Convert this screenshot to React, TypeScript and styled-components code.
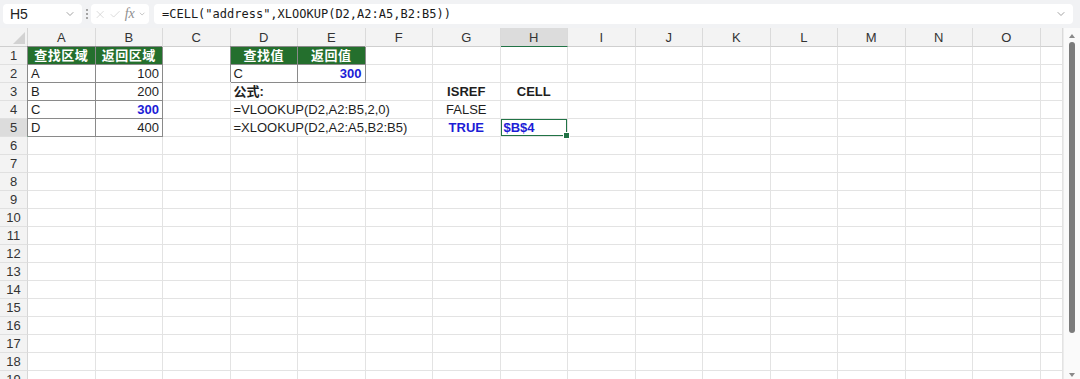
import React from 'react';
import styled, { createGlobalStyle, css } from 'styled-components';
import { X, Check, ChevronDown } from 'lucide-react';

const GlobalStyle = createGlobalStyle`
  html, body {
    margin: 0;
    padding: 0;
    background: #ffffff;
  }
  body {
    font-family: "Liberation Sans", "Noto Sans CJK SC", sans-serif;
    overflow: hidden;
  }
`;

const Window = styled.div`
  width: 1080px;
  height: 379px;
  display: flex;
  flex-direction: column;
  background: #f1f2f4;
  overflow: hidden;
`;

const TopBar = styled.div`
  height: 28px;
  display: flex;
  align-items: center;
  gap: 3px;
  padding: 0 7px 0 3px;
  box-sizing: border-box;
  flex-shrink: 0;
`;

const Box = styled.div`
  height: 20px;
  background: #ffffff;
  border-radius: 4px;
  display: flex;
  align-items: center;
  box-sizing: border-box;
`;

const NameBox = styled(Box)`
  width: 79px;
  padding: 0 6px 0 7px;
  justify-content: space-between;
  font-size: 14px;
  color: #222;
`;

const Dots = styled.div`
  width: 3px;
  display: flex;
  flex-direction: column;
  gap: 2px;
  align-items: center;
  span {
    width: 2px;
    height: 2px;
    border-radius: 50%;
    background: #8a8a8a;
  }
`;

const FnBox = styled(Box)`
  width: 58px;
  padding: 0 3px;
  gap: 3px;
  color: #c4c4c4;
`;

const Fx = styled.span`
  font-family: "Liberation Serif", serif;
  font-style: italic;
  font-size: 14px;
  color: #8f8f8f;
`;

const FormulaInput = styled(Box)`
  flex: 1;
  margin-left: 2px;
  padding: 0 6px 0 8px;
  justify-content: space-between;
  font-family: "DejaVu Sans Mono", "Liberation Mono", monospace;
  font-size: 12px;
  color: #1a1a1a;
`;

const Sheet = styled.div`
  flex: 1;
  display: flex;
  background: #ffffff;
  overflow: hidden;
`;

const Grid = styled.div`
  flex: 1;
  display: grid;
  grid-template-columns: 28px repeat(15, 67.5px) 1fr;
  grid-auto-rows: 18px;
  grid-template-rows: 19px;
  align-content: start;
  overflow: hidden;
`;

const Corner = styled.div`
  background: #f3f3f3;
  border-right: 1px solid #d6d6d6;
  border-bottom: 1px solid #cfcfcf;
  position: relative;
  &::after {
    content: '';
    position: absolute;
    right: 2px;
    bottom: 2px;
    border-left: 12px solid transparent;
    border-bottom: 12px solid #d2d2d2;
  }
`;

const ColHead = styled.div<{ $active?: boolean }>`
  background: ${p => (p.$active ? '#dcdcdc' : '#f3f3f3')};
  border-right: 1px solid #dadada;
  border-bottom: 1px solid ${p => (p.$active ? '#217346' : '#cfcfcf')};
  display: flex;
  align-items: center;
  justify-content: center;
  font-size: 13px;
  color: #333;
`;

const RowHead = styled.div<{ $active?: boolean }>`
  background: ${p => (p.$active ? '#dcdcdc' : '#f3f3f3')};
  border-right: 1px solid ${p => (p.$active ? '#217346' : '#d6d6d6')};
  border-bottom: 1px solid #e0e0e0;
  display: flex;
  align-items: center;
  justify-content: center;
  font-size: 13px;
  color: #333;
`;

type Align = 'left' | 'center' | 'right';

const Cell = styled.div<{
  $align?: Align;
  $bold?: boolean;
  $blue?: boolean;
  $head?: boolean;
  $framed?: boolean;
  $selected?: boolean;
  $span?: number;
}>`
  position: relative;
  box-sizing: border-box;
  border-right: 1px solid #e3e3e3;
  border-bottom: 1px solid #e3e3e3;
  padding: 0 3px;
  display: flex;
  align-items: center;
  justify-content: ${p =>
    p.$align === 'right' ? 'flex-end' : p.$align === 'center' ? 'center' : 'flex-start'};
  font-size: 13px;
  line-height: 17px;
  white-space: nowrap;
  color: ${p => (p.$blue ? '#1c1cd6' : '#1e1e1e')};
  font-weight: ${p => (p.$bold ? 700 : 400)};
  grid-column: span ${p => p.$span ?? 1};
  ${p =>
    p.$framed &&
    css`
      border-right-color: #8a8a8a;
      border-bottom-color: #8a8a8a;
      box-shadow: -1px -1px 0 #8a8a8a;
    `}
  ${p =>
    p.$head &&
    css`
      background: #246f2d;
      color: #ffffff;
      font-weight: 700;
      letter-spacing: 0.5px;
    `}
  ${p =>
    p.$selected &&
    css`
      box-shadow: inset 0 0 0 1px #217346;
      &::after {
        content: '';
        position: absolute;
        right: -3px;
        bottom: -3px;
        width: 5px;
        height: 5px;
        background: #217346;
        border: 1px solid #ffffff;
        z-index: 2;
      }
    `}
`;

const Scrollbar = styled.div`
  width: 17px;
  flex-shrink: 0;
  display: flex;
  flex-direction: column;
  align-items: center;
  background: #fafafa;
  border-left: 1px solid #ececec;
  padding-top: 6px;
  box-sizing: border-box;
`;

const Arrow = styled.div<{ $down?: boolean }>`
  width: 0;
  height: 0;
  border-left: 3px solid transparent;
  border-right: 3px solid transparent;
  ${p =>
    p.$down
      ? css`border-top: 4px solid #8a8a8a;`
      : css`border-bottom: 4px solid #8a8a8a;`}
`;

const Thumb = styled.div`
  width: 6px;
  height: 291px;
  margin: 4px 0 40px;
  border-radius: 3px;
  background: #7b7b7b;
`;

interface CellSpec {
  text?: string;
  align?: Align;
  bold?: boolean;
  blue?: boolean;
  head?: boolean;
  framed?: boolean;
  selected?: boolean;
  span?: number;
}

const columns = ['A', 'B', 'C', 'D', 'E', 'F', 'G', 'H', 'I', 'J', 'K', 'L', 'M', 'N', 'O', ''];

const cells: Record<string, CellSpec> = {
  A1: { text: '查找区域', align: 'center', head: true, framed: true },
  B1: { text: '返回区域', align: 'center', head: true, framed: true },
  A2: { text: 'A', framed: true },
  B2: { text: '100', align: 'right', framed: true },
  A3: { text: 'B', framed: true },
  B3: { text: '200', align: 'right', framed: true },
  A4: { text: 'C', framed: true },
  B4: { text: '300', align: 'right', framed: true, bold: true, blue: true },
  A5: { text: 'D', framed: true },
  B5: { text: '400', align: 'right', framed: true },
  D1: { text: '查找值', align: 'center', head: true, framed: true },
  E1: { text: '返回值', align: 'center', head: true, framed: true },
  D2: { text: 'C', framed: true },
  E2: { text: '300', align: 'right', framed: true, bold: true, blue: true },
  D3: { text: '公式:', bold: true },
  D4: { text: '=VLOOKUP(D2,A2:B5,2,0)', span: 3 },
  D5: { text: '=XLOOKUP(D2,A2:A5,B2:B5)', span: 3 },
  G3: { text: 'ISREF', align: 'center', bold: true },
  H3: { text: 'CELL', align: 'center', bold: true },
  G4: { text: 'FALSE', align: 'center' },
  G5: { text: 'TRUE', align: 'center', bold: true, blue: true },
  H5: { text: '$B$4', bold: true, blue: true, selected: true },
};

const rowCount = 19;

const App: React.FC = () => {
  const rows: React.ReactNode[] = [];
  for (let r = 1; r <= rowCount; r++) {
    rows.push(
      <RowHead key={`h${r}`} $active={r === 5}>
        {r}
      </RowHead>
    );
    let skip = 0;
    columns.forEach((col, i) => {
      if (skip > 0) {
        skip--;
        return;
      }
      const spec = cells[`${col}${r}`] || {};
      if (spec.span) skip = spec.span - 1;
      rows.push(
        <Cell
          key={`${col}${r}-${i}`}
          $align={spec.align}
          $bold={spec.bold}
          $blue={spec.blue}
          $head={spec.head}
          $framed={spec.framed}
          $selected={spec.selected}
          $span={spec.span}
        >
          {spec.text}
        </Cell>
      );
    });
  }

  return (
    <Window>
      <GlobalStyle />
      <TopBar>
        <NameBox>
          <span>H5</span>
          <ChevronDown size={12} color="#8a8a8a" strokeWidth={1.6} />
        </NameBox>
        <Dots>
          <span />
          <span />
          <span />
        </Dots>
        <FnBox>
          <X size={15} strokeWidth={1.2} />
          <Check size={15} strokeWidth={1.2} />
          <Fx>fx</Fx>
          <ChevronDown size={10} color="#9a9a9a" strokeWidth={1.6} />
        </FnBox>
        <FormulaInput>
          <span>=CELL("address",XLOOKUP(D2,A2:A5,B2:B5))</span>
          <ChevronDown size={12} color="#8a8a8a" strokeWidth={1.6} />
        </FormulaInput>
      </TopBar>
      <Sheet>
        <Grid>
          <Corner />
          {columns.map((c, i) => (
            <ColHead key={`c${i}`} $active={c === 'H'}>
              {c}
            </ColHead>
          ))}
          {rows}
        </Grid>
        <Scrollbar>
          <Arrow />
          <Thumb />
          <Arrow $down />
        </Scrollbar>
      </Sheet>
    </Window>
  );
};

export default App;
